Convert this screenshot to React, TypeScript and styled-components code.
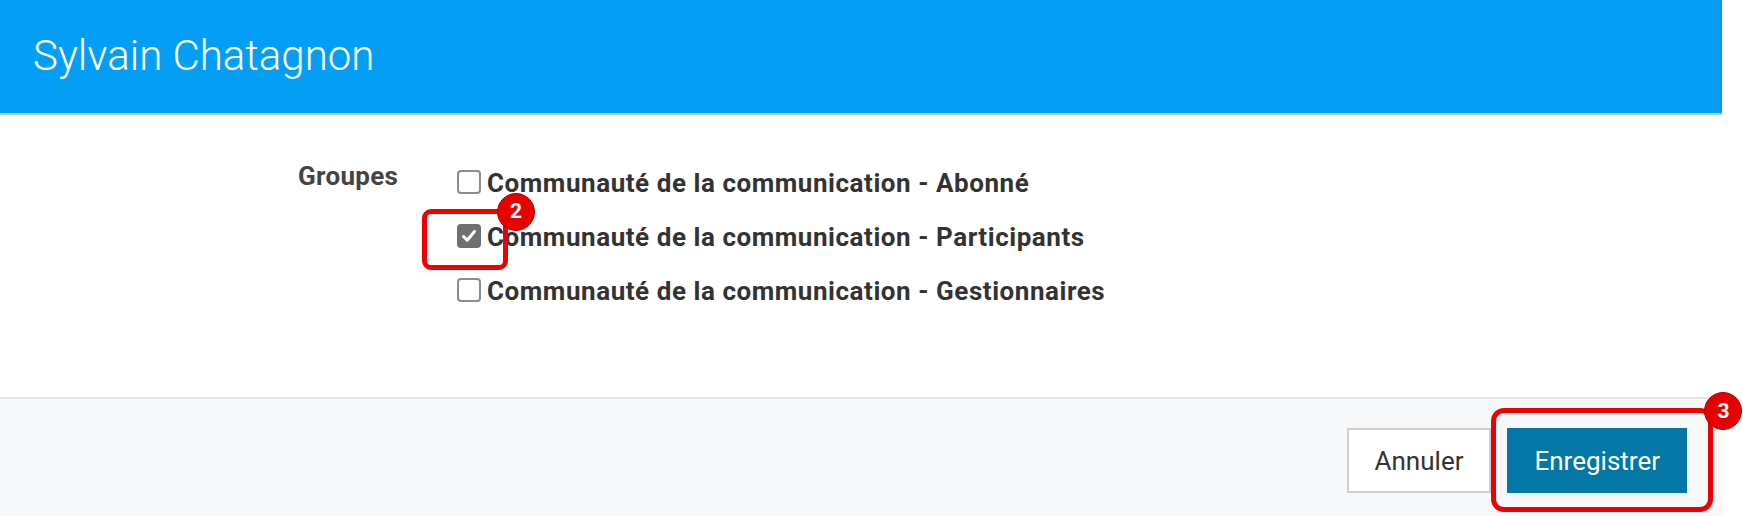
import React from "react";
import styled, { createGlobalStyle } from "styled-components";

const Global = createGlobalStyle`
  html, body { margin: 0; padding: 0; background: #ffffff; }
  body { font-family: Roboto, "Liberation Sans", Arial, sans-serif; }
  * { box-sizing: border-box; }
`;

const Modal = styled.div`
  width: 1722px;
  height: 516px;
  display: flex;
  flex-direction: column;
  background: #ffffff;
  overflow: visible;
`;

const Header = styled.header`
  height: 115px;
  flex: none;
  background: #049ff4;
  border-bottom: 2px solid #b3d3e8;
  display: flex;
  align-items: center;
  padding: 0 0 2px 33px;
`;

const Title = styled.h1`
  margin: 0;
  font-family: Roboto, "Liberation Sans", sans-serif;
  font-weight: 300;
  font-size: 42px;
  color: #ffffff;
  letter-spacing: 0;
`;

const Body = styled.main`
  height: 282px;
  flex: none;
  padding: 41px 0 0 298px;
  display: grid;
  grid-template-columns: 159px 1fr;
  align-items: start;
`;

const Label = styled.div`
  font-size: 26px;
  font-weight: 700;
  color: #444444;
  letter-spacing: 0.3px;
  line-height: 54px;
  margin-top: -7px;
`;

const OptionList = styled.div`
  display: flex;
  flex-direction: column;
`;

const Option = styled.label`
  display: flex;
  align-items: center;
  height: 54px;
  gap: 6px;
  font-size: 26px;
  font-weight: 700;
  color: #333333;
  letter-spacing: 0.55px;
`;

const BoxWrap = styled.span`
  position: relative;
  display: inline-flex;
  flex: none;
`;

const Box = styled.span<{ $checked?: boolean }>`
  width: 24px;
  height: 24px;
  border-radius: 4px;
  border: 2px solid ${(p) => (p.$checked ? "#6f6f6f" : "#8c8c8c")};
  background: ${(p) => (p.$checked ? "#707070" : "#ffffff")};
  display: inline-flex;
  align-items: center;
  justify-content: center;
  margin-top: -3px;
`;

const Highlight = styled.span<{ $l: number; $t: number; $r: number; $b: number; $radius: number }>`
  position: absolute;
  left: ${(p) => p.$l}px;
  top: ${(p) => p.$t}px;
  right: ${(p) => p.$r}px;
  bottom: ${(p) => p.$b}px;
  border: 5px solid #f00000;
  border-radius: ${(p) => p.$radius}px;
  pointer-events: none;
`;

const Badge = styled.span<{ $x: number; $y: number; $size: number }>`
  position: absolute;
  left: ${(p) => p.$x}px;
  top: ${(p) => p.$y}px;
  width: ${(p) => p.$size}px;
  min-width: ${(p) => p.$size}px;
  height: ${(p) => p.$size}px;
  border-radius: 50%;
  background: #e80000;
  border: 1px solid #b50000;
  color: #ffffff;
  font-family: Roboto, "Liberation Sans", sans-serif;
  font-weight: 700;
  font-size: ${(p) => Math.round(p.$size * 0.56)}px;
  letter-spacing: 0;
  display: flex;
  align-items: center;
  justify-content: center;
  line-height: 1;
`;

const Footer = styled.footer`
  flex: 1;
  background: #f7f8fa;
  border-top: 2px solid #e6e6e6;
  display: flex;
  justify-content: flex-end;
  align-items: flex-start;
  padding: 29px 35px 0 0;
  gap: 16px;
`;

const Button = styled.button<{ $primary?: boolean }>`
  height: 65px;
  padding: 0 ${(p) => (p.$primary ? 25 : 26)}px;
  font-family: Roboto, "Liberation Sans", sans-serif;
  font-size: 26px;
  font-weight: 400;
  letter-spacing: 0;
  cursor: pointer;
  border-radius: 0;
  color: ${(p) => (p.$primary ? "#ffffff" : "#333333")};
  background: ${(p) => (p.$primary ? "#0477a6" : "#ffffff")};
  border: 2px solid ${(p) => (p.$primary ? "#0477a6" : "#cfcfcf")};
`;

const ButtonWrap = styled.div`
  position: relative;
  display: flex;
`;

const Check = () => (
  <svg width="18" height="18" viewBox="0 0 18 18">
    <path d="M3.5 9.5 L7.2 13.2 L14.5 4.5" fill="none" stroke="#ffffff" strokeWidth="3" strokeLinecap="round" strokeLinejoin="round" />
  </svg>
);

const options = [
  { text: "Communauté de la communication - Abonné", checked: false },
  { text: "Communauté de la communication - Participants", checked: true },
  { text: "Communauté de la communication - Gestionnaires", checked: false },
];

export default function App() {
  return (
    <>
      <Global />
      <Modal>
        <Header>
          <Title>Sylvain Chatagnon</Title>
        </Header>
        <Body>
          <Label>Groupes</Label>
          <OptionList>
            {options.map((o) => (
              <Option key={o.text}>
                <BoxWrap>
                  <Box $checked={o.checked}>{o.checked && <Check />}</Box>
                  {o.checked && (
                    <>
                      <Highlight $l={-35} $t={-18} $r={-27} $b={-22} $radius={9} />
                      <Badge $x={40} $y={-34} $size={38}>2</Badge>
                    </>
                  )}
                </BoxWrap>
                {o.text}
              </Option>
            ))}
          </OptionList>
        </Body>
        <Footer>
          <Button>Annuler</Button>
          <ButtonWrap>
            <Button $primary>Enregistrer</Button>
            <Highlight $l={-16} $t={-20} $r={-26} $b={-19} $radius={13} />
            <Badge $x={197} $y={-36} $size={38}>3</Badge>
          </ButtonWrap>
        </Footer>
      </Modal>
    </>
  );
}
